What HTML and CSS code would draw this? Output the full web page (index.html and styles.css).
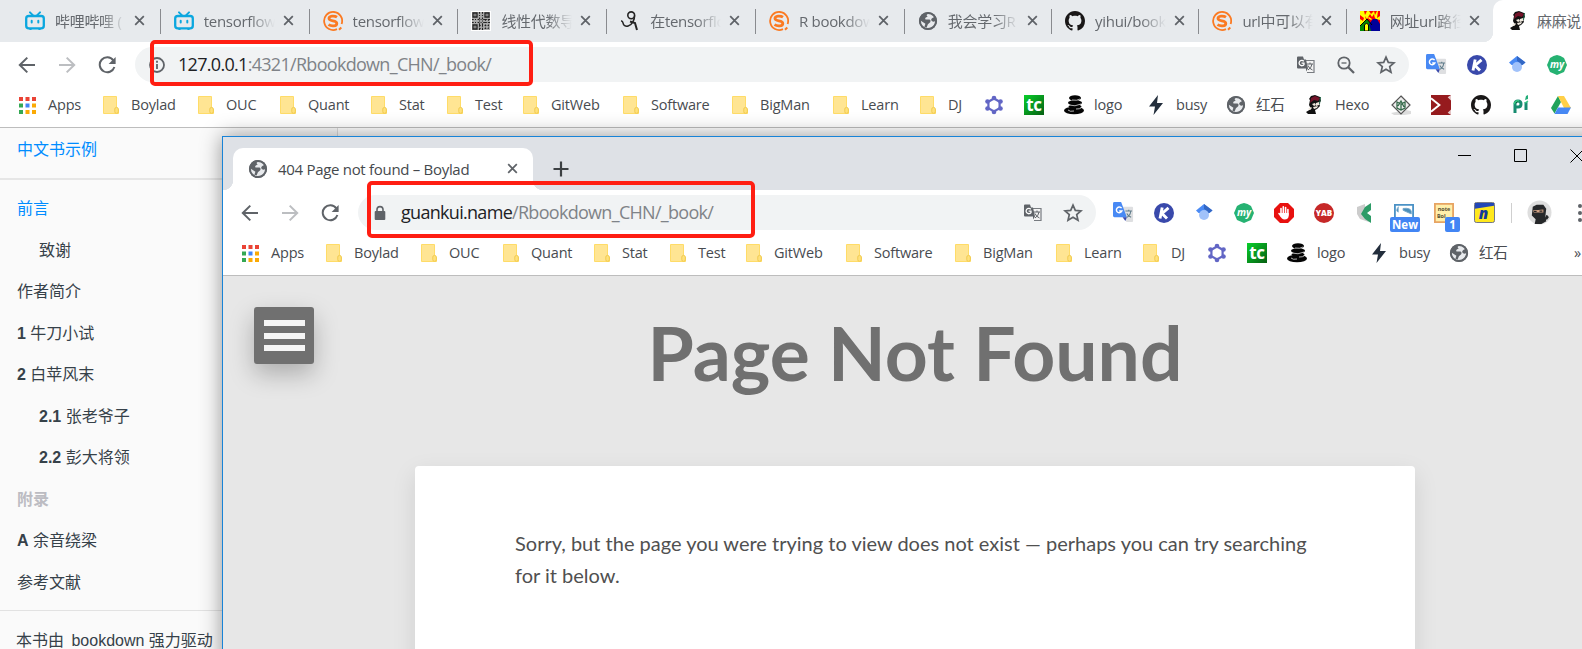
FILE: index.html
```html
<!DOCTYPE html>
<html lang="zh-CN">
<head>
<meta charset="utf-8">
<title>中文书示例</title>
<link rel="stylesheet" href="styles.css">
</head>
<body>
<svg class="sprite" aria-hidden="true">
  <defs>
    <linearGradient id="green" x1="0" y1="0" x2="1" y2="1"><stop offset="0" stop-color="#08cf2b"/><stop offset="1" stop-color="#075f12"/></linearGradient>
    <symbol id="close" viewBox="0 0 12 12"><path d="M1.3 1.3l9.4 9.4M10.7 1.3l-9.4 9.4" stroke="#5f6368" stroke-width="1.9"/></symbol>
    <symbol id="bili" viewBox="0 0 20 20"><g fill="none" stroke="#0ba7df" stroke-linecap="round"><rect x="1.2" y="5" width="17.6" height="12.4" rx="2.6" stroke-width="2.3"/><path d="M5 1.4l3 3M15 1.4l-3 3" stroke-width="2"/><path d="M6.7 9.8v1.8M13.3 9.8v1.8" stroke-width="2"/><path d="M5 18.3h1M14 18.3h1" stroke-width="1.5"/></g></symbol>
    <symbol id="sogou" viewBox="0 0 20 20"><path d="M18.600 13A9 9 0 1 0 14 18.100" fill="none" stroke="#fb7a22" stroke-width="1.8"/><path d="M14 6.2C11.5 4.5 6 4.5 6 7.6c0 3.2 7.8 1.5 7.8 4.8 0 3-5.6 3-8.3 1.2" fill="none" stroke="#fb7a22" stroke-width="2.8"/><path d="M16 18.700l2.300-2.200" stroke="#fb7a22" stroke-width="2"/></symbol>
    <symbol id="qr" viewBox="0 0 20 20"><path d="M0 0h20v20H0z" fill="#fff"/><path d="M1 1h18v18H1z" fill="#aaa"/><g stroke="#222" fill="none"><path d="M2 2h4v4H2zM14 2h4v4h-4zM2 14h4v4H2z" stroke-width="1.3"/><path d="M8.500 1v18M11.500 1v18M1 8.500h18M1 11.500h18M14.500 8v11M17.500 8v11M8 14.500h11M8 17.500h11" stroke-width="1.1" stroke-dasharray="1.7 1.300 1 1.6"/></g><path d="M3.500 3.500h1v1h-1zM15.500 3.500h1v1h-1zM3.500 15.500h1v1h-1z"/></symbol>
    <symbol id="figure" viewBox="0 0 20 20"><g fill="none" stroke="#252525"><circle cx="11.2" cy="4.300" r="3.4" stroke-width="1.6"/><path d="M14.600 4.5c.2 4-2.500 9.500-6.400 10.500-3 .7-4.800-.7-5.200-3.200-.2-1.3-1-1.800-1.900-2" stroke-width="1.5"/><path d="M10 10.500l5 1.500 2 7" stroke-width="2"/></g></symbol>
    <symbol id="globe" viewBox="0 0 20 20"><circle cx="10" cy="10" r="9" fill="#5f6368"/><path d="M12.8 2.4c-4.6 0-5 2-3.1 3-2 1-3.1 1.5-2.2 3.1h3.2c2.2 0 2 1.6 1.5 2.8l-2.3 2-1.3 3.1-2.2-.6 1-3.1-4.2-2.8-1.1-1.1C2 13.3 5 17 9.2 17.4c4.5.3 8.1-3 8.1-7.4-1.6 1.2-3.5.6-4-.8-.5-1.3.9-2.4 3-3.2z" fill="#e8eaed"/><circle cx="10" cy="10" r="8.1" fill="none" stroke="#5f6368" stroke-width="2"/></symbol>
    <symbol id="github" viewBox="0 0 16 16"><path fill="#191717" d="M8 0C3.58 0 0 3.58 0 8c0 3.54 2.29 6.53 5.47 7.59.4.07.55-.17.55-.38 0-.19-.01-.82-.01-1.49-2.01.37-2.53-.49-2.69-.94-.09-.23-.48-.94-.82-1.13-.28-.15-.68-.52-.01-.53.63-.01 1.08.58 1.23.82.72 1.21 1.87.87 2.33.66.07-.52.28-.87.51-1.07-1.78-.2-3.64-.89-3.64-3.95 0-.87.31-1.59.82-2.15-.08-.2-.36-1.02.08-2.12 0 0 .67-.21 2.2.82.64-.18 1.32-.27 2-.27s1.36.09 2 .27c1.53-1.04 2.2-.82 2.2-.82.44 1.1.16 1.92.08 2.12.51.56.82 1.27.82 2.15 0 3.07-1.87 3.75-3.65 3.95.29.25.54.73.54 1.48 0 1.07-.01 1.93-.01 2.2 0 .21.15.46.55.38A8.01 8.01 0 0 0 16 8c0-4.42-3.58-8-8-8z"/></symbol>
    <symbol id="house" viewBox="0 0 20 20"><path fill="#f00" d="M0 0h20v20H0z"/><path fill="#ff0" d="M0 0h4l1 4 2-4h2l2 3 3-3 1 4 2-4h1l-1 7 3-2v4l-4-1-2-2-3 3-3-2-3 3-2 2-3 3V8l3 2 1-3-4-3z"/><path fill="#f00" d="M5 5l2 3 3-5 2 3 2-3 1 5h-3l-3-2-3 3z"/><path fill="#080" d="M0 20v-5l7-7 4 5v7z"/><path fill="#009" d="M9 13l4-5h4l3 5v7h-9z"/><path d="M0 15l7-7 5 6" fill="none" stroke="#000"/><path fill="#ff0" stroke="#000" d="M4.5 20v-6l2-2 2 2v6z"/></symbol>
    <symbol id="face" viewBox="0 0 20 20"><path fill="#111" d="M6 1l4-1 5 2 1 4-2 2 1 3-3 3-2 1 1 4H3l-2-2 5-3-2-4 1-5-1-1z"/><path fill="#741329" d="M6 3l4-2 5 2-2 3-4-1-4 3z"/><path fill="#efe8dd" d="M7 9l3-1 1 2-2 1zM11 8l3-1v3l-3 1zM8 12l5-1-1 2-3 1zM3 14l3-2 1 1-2 2z"/><path fill="#24684a" d="M15 2h1l-1 7h-1z"/></symbol>
    <symbol id="back" viewBox="0 0 18 18"><path d="M17 9H2.3M9.3 1.6L1.8 9l7.5 7.4" fill="none" stroke="currentColor" stroke-width="2"/></symbol>
    <symbol id="reload" viewBox="0 0 18 18"><path d="M15.3 4.3A7.5 7.5 0 1 0 16.4 11" fill="none" stroke="#5f6368" stroke-width="2"/><path d="M17.6 1v7h-7z" fill="#5f6368"/></symbol>
    <symbol id="info" viewBox="0 0 16 16"><circle cx="8" cy="8" r="7" fill="none" stroke="#5f6368" stroke-width="1.8"/><path d="M8 7v5M8 3.8v2" stroke="#5f6368" stroke-width="1.8"/></symbol>
    <symbol id="lock" viewBox="0 0 16 16"><rect x="2.7" y="6" width="10.6" height="9" rx="1" fill="#5f6368"/><path d="M5 6.5V4.6a3 3 0 0 1 6 0v1.9" fill="none" stroke="#5f6368" stroke-width="1.6"/></symbol>
    <symbol id="translate" viewBox="0 0 20 20"><path d="M8 5.5h10v12h-7" fill="#f4f4f4" stroke="#777b80" stroke-width="1.2"/><path d="M1 2.5q0-1 1-1h5l1 3h2l2 9-2 3v-3H2q-1 0-1-1z" fill="#5f6368"/><path d="M7.8 6.2A2.7 2.7 0 1 0 8 9.6V8.1H5.6" fill="none" stroke="#fff" stroke-width="1.3"/><path d="M11 9h6M14 7.5V9M16 9q-.5 4-4 6M12 10.5q1 3 4.5 4.5" fill="none" stroke="#5f6368" stroke-width="1"/></symbol>
    <symbol id="gtranslate" viewBox="0 0 22 22"><path d="M9 5h11q1 0 1 1v14q0 1-1 1h-6" fill="#dedfe1"/><path d="M1.5 0h7l6 16H1.5Q0 16 0 14.500V1.5Q0 0 1.5 0z" fill="#4889f4"/><path d="M10 16h4.500L13 20z" fill="#3949ab"/><path d="M9 6.500a3 3 0 1 0 .3 3H6.500" fill="none" stroke="#fff" stroke-width="1.5"/><path d="M13 9.500h7M16.500 8v1.500M18.500 10q-.5 4.500-4 6M14.500 12q1 2.500 4.500 4" fill="none" stroke="#607d8b" stroke-width="1.100"/></symbol>
    <symbol id="zoomout" viewBox="0 0 18 18"><g fill="none" stroke="#5f6368"><circle cx="7" cy="7" r="5.700" stroke-width="1.800"/><path d="M11 11l6 6" stroke-width="2.300"/><path d="M4.500 7h5" stroke-width="1.300"/></g></symbol>
    <symbol id="star" viewBox="0 0 20 20"><path d="M10 2.200l2.300 5.200 5.700.5-4.300 3.700 1.300 5.600-5-3-5 3 1.300-5.600L2 7.900l5.700-.5z" fill="none" stroke="#5f6368" stroke-width="1.700"/></symbol>
    <symbol id="kext" viewBox="0 0 20 20"><circle cx="10" cy="10" r="10" fill="#3949ab"/><path d="M8.200 4.500L6 15.500M14.500 4.800L8 10.500l5 5" fill="none" stroke="#fff" stroke-width="2.900"/></symbol>
    <symbol id="scholar" viewBox="0 0 20 20"><path d="M2 7.500L10 1l8.500 6.500-3 2.500h-11z" fill="#4a8af4"/><path d="M10 1l8.500 6.500-4 2.900-4.500-5z" fill="#3367c4"/><circle cx="10" cy="12" r="5" fill="#a1c2fa"/></symbol>
    <symbol id="my" viewBox="0 0 20 20"><path d="M6.500 1L10 0l3.500 1L17 3l1.500 3.500L20 10l-1.500 3.500L17 17l-3.500 1.500L10 20l-3.500-1.500L3 17l-1.500-3.500L0 10l1.500-3.500L3 3z" fill="#26b272"/><text x="10" y="12.500" text-anchor="middle" class="my-text">my</text></symbol>
    <symbol id="hand" viewBox="0 0 20 20"><path d="M6 0h8l6 6v8l-6 6H6l-6-6V6z" fill="#e8110f"/><path d="M7 12V5.500M9.300 11V3.800M11.600 11V4.500M13.900 12V6.500M7 13l-2-2.500" stroke="#fff" stroke-width="1.600" stroke-linecap="round"/><path d="M6.200 10h8.500v2.500q0 4-4.200 4-2.900 0-4.500-4z" fill="#fff"/></symbol>
    <symbol id="yab" viewBox="0 0 20 20"><circle cx="10" cy="10" r="10" fill="#c62828"/><text x="10" y="13" text-anchor="middle" class="yab-text">YAB</text></symbol>
    <symbol id="kite" viewBox="0 0 20 20"><path d="M3 4l8-3v9l4 9-9-3-3-5z" fill="#ccc"/><path d="M17 0v7l-4 3 4 3v7l-6-4-4-5 4-7z" fill="#2d9c67"/></symbol>
    <symbol id="clip" viewBox="0 0 22 20"><path d="M1 1h20v17H1z" fill="#fff" stroke="#4b92c6" stroke-width="2"/><path d="M5 3Q1 8 5 9M10 5q8-1 9 3v3Q14 9 10 7z" fill="#4b8fbb" stroke="#73a7ca"/></symbol>
    <symbol id="note" viewBox="0 0 22 22"><path d="M1 1h20v20H1z" fill="#ffefaa" stroke="#e7a463" stroke-width="2"/><text x="11" y="9" text-anchor="middle" class="note-text">note</text><text x="8" y="16" text-anchor="middle" class="note-text">Bol</text></symbol>
    <symbol id="next" viewBox="0 0 22 22"><rect width="21" height="21" x=".5" y=".5" rx="2" fill="#ffe81d" stroke="#6a6f8a"/><path d="M1 1h20v3L1 7z" fill="#2347b6"/><text x="10" y="18" text-anchor="middle" class="next-text">n</text></symbol>
    <symbol id="ninja" viewBox="0 0 26 26"><circle cx="13" cy="13" r="12.500" fill="#dedede"/><path d="M6 7l4-2h7l3 4-1 9 1 4-5 3H8l1-5-4-4z" fill="#26282a"/><path d="M6 11l11-1v3H7z" fill="#d2a284"/><path d="M7 12h3M13 11.500h3" stroke="#222" stroke-width="1.200"/><path d="M18 22l3-6M20 20l2-3" stroke="#26282a" stroke-width="2"/></symbol>
    <symbol id="apps" viewBox="0 0 17 17"><path fill="#ea4335" d="M0 0h4v4H0zM6.500 0h4v4h-4zM13 0h4v4h-4z"/><path fill="#34a853" d="M0 6.500h4v4H0zM0 13h4v4H0z"/><path fill="#4285f4" d="M6.500 6.500h4v4h-4z"/><path fill="#fbaa05" d="M13 6.500h4v4h-4zM6.500 13h4v4h-4zM13 13h4v4h-4z"/></symbol>
    <symbol id="folder" viewBox="0 0 16 18"><path d="M.5.5h13v11l2 2v4H.5z" fill="#ffe593" stroke="#ffdc68"/><rect x="11.800" y="11.500" width="3.500" height="5.800" rx="1.500" fill="#ffe17c" stroke="#f1cb50"/></symbol>
    <symbol id="hexa" viewBox="0 0 20 20"><path d="M10 3.500l5.600 3.200v6.500L10 16.500l-5.600-3.300V6.700z" fill="none" stroke="#6266c5" stroke-width="2.200"/><g fill="#6266c5"><circle cx="10" cy="3" r="2.300"/><circle cx="16.500" cy="6.500" r="2.300"/><circle cx="16.500" cy="13.500" r="2.300"/><circle cx="10" cy="17" r="2.300"/><circle cx="3.500" cy="13.500" r="2.300"/><circle cx="3.500" cy="6.500" r="2.300"/></g></symbol>
    <symbol id="tc" viewBox="0 0 20 20"><path d="M0 0h20v20H0z" fill="url(#green)"/><text x="10" y="16" text-anchor="middle" class="tc-text">tc</text></symbol>
    <symbol id="stones" viewBox="0 0 20 20"><g fill="#050505"><ellipse cx="11" cy="3" rx="6" ry="2.800"/><ellipse cx="11" cy="7.800" rx="7" ry="2.700"/><ellipse cx="11" cy="11.500" rx="6.500" ry="2.200"/><ellipse cx="10" cy="15.500" rx="10" ry="3.800"/></g><path d="M8 5q5 1 8-1M5 10q6 2 12-1M4 15q2 2 6 1M12 14q4 0 5-1" fill="none" stroke="#ddd" stroke-width=".8"/></symbol>
    <symbol id="bolt" viewBox="0 0 14 20"><path fill="#232e3c" d="M9 0L0 11.500h6L4.500 20 14 8H8z"/></symbol>
    <symbol id="diamond" viewBox="0 0 20 20"><path d="M0 16l5-1M15 15l5 1v3l-7 1H3L0 18z" fill="#ddd"/><path d="M10 1l9 9-9 9-9-9z" fill="#eee" stroke="#555" stroke-width="1.200"/><path d="M6 7l4 2 4-2v6l-4 2-4-2zM10 9v6M7 11l3-5 3 6" fill="none" stroke="#346a4a" stroke-width="1.300"/></symbol>
    <symbol id="redx" viewBox="0 0 18 18"><path d="M0 0h18v18H0z" fill="#961b1e"/><path d="M0 3l7.500 6L0 15" fill="none" stroke="#fff" stroke-width="1.800"/><path d="M18 0l-3 2 3 3zM18 13l-3 3 3 2z" fill="#fff" opacity=".75"/></symbol>
    <symbol id="pi" viewBox="0 0 18 20"><path d="M3 18V9q0-3 3-3t3 3-3 3-3-1M14 7v8" fill="none" stroke="#178c70" stroke-width="3"/><path d="M14 1l2-1v4l-3 1z" fill="#23ad78"/><path d="M2 9q2-4 5-3M13 8l3-2" stroke="#36cb83" stroke-width="1.500"/></symbol>
    <symbol id="drive" viewBox="0 0 20 18"><path d="M7 0L0 12l3.500 5.500L10 6z" fill="#20a35b"/><path d="M7 0h6l7 12h-7z" fill="#ffcf48"/><path d="M7 11.500h13L16.500 18h-13z" fill="#4688f4"/></symbol>
  </defs>
</svg>

<div class="desktop">
  <section class="browser back-window">
    <div class="tabs">
      <div class="tab"><svg class="favicon"><use href="#bili"/></svg><span class="tab-title">哔哩哔哩 (</span><svg class="close"><use href="#close"/></svg></div>
      <div class="tab"><svg class="favicon"><use href="#bili"/></svg><span class="tab-title">tensorflow</span><svg class="close"><use href="#close"/></svg></div>
      <div class="tab"><svg class="favicon"><use href="#sogou"/></svg><span class="tab-title">tensorflow</span><svg class="close"><use href="#close"/></svg></div>
      <div class="tab"><svg class="favicon"><use href="#qr"/></svg><span class="tab-title">线性代数导</span><svg class="close"><use href="#close"/></svg></div>
      <div class="tab"><svg class="favicon"><use href="#figure"/></svg><span class="tab-title">在tensorflo</span><svg class="close"><use href="#close"/></svg></div>
      <div class="tab"><svg class="favicon"><use href="#sogou"/></svg><span class="tab-title">R bookdow</span><svg class="close"><use href="#close"/></svg></div>
      <div class="tab"><svg class="favicon"><use href="#globe"/></svg><span class="tab-title">我会学习R</span><svg class="close"><use href="#close"/></svg></div>
      <div class="tab"><svg class="favicon"><use href="#github"/></svg><span class="tab-title">yihui/book</span><svg class="close"><use href="#close"/></svg></div>
      <div class="tab"><svg class="favicon"><use href="#sogou"/></svg><span class="tab-title">url中可以有</span><svg class="close"><use href="#close"/></svg></div>
      <div class="tab"><svg class="favicon"><use href="#house"/></svg><span class="tab-title">网址url路径</span><svg class="close"><use href="#close"/></svg></div>
      <div class="tab current"><svg class="favicon"><use href="#face"/></svg><span class="tab-title">麻麻说</span></div>
    </div>
    <div class="toolbar">
      <div class="nav"><svg><use href="#back"/></svg><svg class="forward"><use href="#back"/></svg><svg><use href="#reload"/></svg></div>
      <div class="omnibox"><svg class="site"><use href="#info"/></svg><span class="url"><b>127.0.0.1</b>:4321/Rbookdown_CHN/_book/</span><div class="actions"><svg><use href="#translate"/></svg><svg class="magnifier"><use href="#zoomout"/></svg><svg><use href="#star"/></svg></div></div>
      <div class="extensions"><svg class="wide"><use href="#gtranslate"/></svg><svg><use href="#kext"/></svg><svg><use href="#scholar"/></svg><svg><use href="#my"/></svg></div>
    </div>
    <div class="bookmarks">
      <span><svg class="apps"><use href="#apps"/></svg>Apps</span><span><svg><use href="#folder"/></svg>Boylad</span><span><svg><use href="#folder"/></svg>OUC</span><span><svg><use href="#folder"/></svg>Quant</span><span><svg><use href="#folder"/></svg>Stat</span><span><svg><use href="#folder"/></svg>Test</span><span><svg><use href="#folder"/></svg>GitWeb</span><span><svg><use href="#folder"/></svg>Software</span><span><svg><use href="#folder"/></svg>BigMan</span><span><svg><use href="#folder"/></svg>Learn</span><span><svg><use href="#folder"/></svg>DJ</span><span><svg class="logo"><use href="#hexa"/></svg></span><span><svg class="logo"><use href="#tc"/></svg></span><span><svg class="logo"><use href="#stones"/></svg>logo</span><span><svg class="logo"><use href="#bolt"/></svg>busy</span><span><svg class="logo"><use href="#globe"/></svg>红石</span><span><svg class="logo"><use href="#face"/></svg>Hexo</span><span><svg class="logo"><use href="#diamond"/></svg></span><span><svg class="logo"><use href="#redx"/></svg></span><span><svg class="logo"><use href="#github"/></svg></span><span><svg class="logo"><use href="#pi"/></svg></span><span><svg class="logo"><use href="#drive"/></svg></span>
    </div>
    <aside class="book">
      <div class="book-title">中文书示例</div>
      <ul class="chapters">
        <li class="active">前言</li>
        <li class="sub">致谢</li>
        <li>作者简介</li>
        <li><b>1</b> 牛刀小试</li>
        <li><b>2</b> 白苹风末</li>
        <li class="sub"><b>2.1</b> 张老爷子</li>
        <li class="sub"><b>2.2</b> 彭大将领</li>
        <li class="part">附录</li>
        <li><b>A</b> 余音绕梁</li>
        <li>参考文献</li>
      </ul>
      <div class="powered">本书由 <span>bookdown</span> 强力驱动</div>
    </aside>
  </section>

  <section class="browser front-window">
    <div class="titlebar">
      <div class="page-tab"><svg class="favicon"><use href="#globe"/></svg><span>404 Page not found – Boylad</span><svg class="close"><use href="#close"/></svg></div>
      <svg class="new-tab" viewBox="0 0 16 16"><path d="M8 .5v15M.5 8h15" stroke="#3c4043" stroke-width="2.200"/></svg>
      <div class="window-controls">
        <svg viewBox="0 0 14 14"><path d="M0 6.500h13" stroke="#000"/></svg>
        <svg viewBox="0 0 14 14"><path d="M.5.5h12v12H.5z" fill="none" stroke="#000"/></svg>
        <svg viewBox="0 0 14 14"><path d="M.5.5l13 13M13.500.5l-13 13" stroke="#000"/></svg>
      </div>
    </div>
    <div class="toolbar">
      <div class="nav"><svg><use href="#back"/></svg><svg class="forward"><use href="#back"/></svg><svg><use href="#reload"/></svg></div>
      <div class="omnibox"><svg class="site"><use href="#lock"/></svg><span class="url"><b>guankui.name</b>/Rbookdown_CHN/_book/</span><div class="actions"><svg><use href="#translate"/></svg><svg><use href="#star"/></svg></div></div>
      <div class="extensions">
        <svg class="wide"><use href="#gtranslate"/></svg><svg><use href="#kext"/></svg><svg><use href="#scholar"/></svg><svg><use href="#my"/></svg><svg><use href="#hand"/></svg><svg><use href="#yab"/></svg><svg><use href="#kite"/></svg>
        <div class="badged"><svg><use href="#clip"/></svg><span class="badge badge-new">New</span></div>
        <div class="badged"><svg><use href="#note"/></svg><span class="badge">1</span></div>
        <svg class="wide"><use href="#next"/></svg>
      </div>
      <div class="profile"><svg class="avatar"><use href="#ninja"/></svg><svg class="dots" viewBox="0 0 4 18"><circle cx="2" cy="2" r="2" fill="#5f6368"/><circle cx="2" cy="9" r="2" fill="#5f6368"/><circle cx="2" cy="16" r="2" fill="#5f6368"/></svg></div>
    </div>
    <div class="bookmarks">
      <span><svg class="apps"><use href="#apps"/></svg>Apps</span><span><svg><use href="#folder"/></svg>Boylad</span><span><svg><use href="#folder"/></svg>OUC</span><span><svg><use href="#folder"/></svg>Quant</span><span><svg><use href="#folder"/></svg>Stat</span><span><svg><use href="#folder"/></svg>Test</span><span><svg><use href="#folder"/></svg>GitWeb</span><span><svg><use href="#folder"/></svg>Software</span><span><svg><use href="#folder"/></svg>BigMan</span><span><svg><use href="#folder"/></svg>Learn</span><span><svg><use href="#folder"/></svg>DJ</span><span><svg class="logo"><use href="#hexa"/></svg></span><span><svg class="logo"><use href="#tc"/></svg></span><span><svg class="logo"><use href="#stones"/></svg>logo</span><span><svg class="logo"><use href="#bolt"/></svg>busy</span><span><svg class="logo"><use href="#globe"/></svg>红石</span><span class="more">»</span>
    </div>
    <main class="missing">
      <div class="menu-button"><i></i><i></i><i></i></div>
      <h1>Page Not Found</h1>
      <article class="message">Sorry, but the page you were trying to view does not exist — perhaps you can try searching for it below.</article>
    </main>
  </section>
  <div class="mark mark-local"></div>
  <div class="mark mark-remote"></div>
</div>
</body>
</html>
```
FILE: styles.css
```css
* { box-sizing: border-box; }
body { margin: 0; overflow: hidden; background: #fff; }
svg { display: block; flex: none; overflow: visible; }
.sprite { position: absolute; width: 0; height: 0; }
.desktop { position: relative; width: 1582px; height: 649px; overflow: hidden; }
.browser { font-family: "Open Sans", "Noto Sans CJK SC", sans-serif; background: #fff; }
.back-window { height: 649px; }

.tabs { display: flex; height: 42px; padding-left: 11px; background: #e7eaed; }
.tab { position: relative; display: flex; flex: none; align-items: center; width: 148.800px; padding: 0 0 1px 14px; color: #65696e; font-size: 15px; letter-spacing: -.3px; }
.tab::after { content: ""; position: absolute; right: -1px; top: 9px; width: 1px; height: 25px; background: #898b8f; }
.favicon { width: 20px; height: 20px; }
.tab-title { width: 71px; height: 24px; margin-left: 10px; overflow: hidden; line-height: 24px; white-space: nowrap; -webkit-mask-image: linear-gradient(90deg, #000 64%, transparent); mask-image: linear-gradient(90deg, #000 64%, transparent); }
.close { width: 11px; height: 11px; margin-left: 8px; }
.tab:nth-child(n+7) { width: 147.300px; }
.tab:nth-child(10)::after { display: none; }
.tab.current { width: 110px; padding-left: 16px; border-radius: 10px 0 0; background: #fff; }
.current::before { content: ""; position: absolute; left: -10px; bottom: 0; width: 10px; height: 10px; background: radial-gradient(circle at 0 0, #e7eaed 10px, #fff 10.500px); }
.tab.current::after { display: none; }
.current .tab-title { margin-left: 8px; -webkit-mask-image: none; mask-image: none; }

.toolbar { display: flex; align-items: center; height: 45px; }
.nav { display: flex; flex: none; gap: 22px; width: 117px; margin-left: 18px; color: #5f6368; }
.nav svg { width: 18px; height: 18px; }
.nav .forward { color: #bcbec1; transform: scaleX(-1); }
.omnibox { display: flex; flex: none; align-items: center; width: 1274px; height: 35px; padding-left: 14px; border-radius: 18px; background: #f1f3f4; }
.site { width: 16px; height: 16px; }
.url { width: 330px; margin: -1px 0 0 13px; color: #7f8388; font-size: 18px; line-height: 26px; letter-spacing: -.7px; white-space: nowrap; }
.url b { color: #202124; font-weight: 400; }
.actions { display: flex; gap: 20px; margin-left: auto; padding-right: 13px; }
.actions svg { width: 20px; height: 20px; }
.actions .magnifier { width: 18px; height: 18px; margin: 1px; }
.extensions { display: flex; align-items: center; gap: 20px; margin-left: 17px; }
.extensions svg { width: 20px; height: 20px; }
.extensions .wide { width: 21px; height: 21px; }

.bookmarks { display: flex; align-items: center; height: 41px; padding: 0 0 4px 19px; border-bottom: 1px solid #bdbdbd; color: #484b50; font-size: 14.500px; line-height: 22px; }
.bookmarks span { display: flex; flex: none; align-items: center; gap: 12px; height: 30px; white-space: nowrap; letter-spacing: -.2px; }
.bookmarks svg { width: 16px; height: 18px; }
.bookmarks .apps { width: 17px; height: 17px; }
.bookmarks .logo { width: 20px; height: 20px; margin-right: -2px; }
.bookmarks span:nth-child(1) { width: 84px; }
.bookmarks span:nth-child(2) { width: 95px; }
.bookmarks span:nth-child(3) { width: 82px; }
.bookmarks span:nth-child(4) { width: 91px; }
.bookmarks span:nth-child(5) { width: 76px; }
.bookmarks span:nth-child(6) { width: 76px; }
.bookmarks span:nth-child(7) { width: 100px; }
.bookmarks span:nth-child(8) { width: 109px; }
.bookmarks span:nth-child(9) { width: 101px; }
.bookmarks span:nth-child(10) { width: 87px; }
.bookmarks span:nth-child(11) { width: 64px; }
.bookmarks span:nth-child(12) { width: 40px; }
.bookmarks span:nth-child(13) { width: 40px; }
.bookmarks span:nth-child(14) { width: 82px; }
.bookmarks span:nth-child(15) { width: 80px; }
.bookmarks span:nth-child(16) { width: 79px; }
.bookmarks span:nth-child(17) { width: 86px; }
.bookmarks span:nth-child(n+18) { width: 40px; }

.book { width: 338px; height: 521px; border-right: 1px solid #ddd; background: #fafafa; color: #364149; font: 16px/24px "Liberation Sans", "Noto Sans CJK SC", sans-serif; }
.book-title { height: 52px; padding: 10px 0 0 17px; border-bottom: 2px solid #e6e6e6; color: #008cff; }
.chapters { height: 431px; margin: 0; padding: 17px 0 0 17px; border-bottom: 1px solid #e2e2e2; list-style: none; }
.chapters li { height: 41.500px; }
.chapters .sub { padding-left: 22px; }
.chapters .active { color: #008cff; }
.chapters .part { color: #bcbcc2; font-weight: 700; }
.powered { padding: 18px 0 0 16px; white-space: nowrap; }
.powered span { margin-left: 3px; }

.front-window { position: absolute; left: 222px; top: 136px; width: 1385px; height: 530px; border: solid #1883d7; border-width: 1px 0 0 1px; box-shadow: 0 0 20px rgba(0, 0, 0, .42); }
.titlebar { display: flex; align-items: center; height: 53px; padding-left: 10px; background: #dee1e6; }
.page-tab { position: relative; display: flex; align-self: flex-end; align-items: center; width: 300px; height: 42px; padding: 0 0 1px 15px; border-radius: 10px 10px 0 0; background: #fff; color: #45494d; font-size: 15px; letter-spacing: -.3px; }
.page-tab::before, .page-tab::after { content: ""; position: absolute; bottom: 0; width: 10px; height: 10px; }
.page-tab::before { left: -10px; background: radial-gradient(circle at 0 0, #dee1e6 10px, #fff 10.500px); }
.page-tab::after { right: -10px; background: radial-gradient(circle at 100% 0, #dee1e6 10px, #fff 10.500px); }
.page-tab span { width: 219px; margin-left: 10px; white-space: nowrap; }
.page-tab .close { margin-left: 10px; }
.new-tab { width: 16px; height: 16px; margin: 11px 0 0 20px; }
.window-controls { display: flex; gap: 42px; margin: -15px 0 0 889px; }
.window-controls svg { width: 14px; height: 14px; }
.front-window .omnibox { width: 738px; }
.front-window .toolbar { height: 45px; }
.front-window .bookmarks { height: 41px; padding-bottom: 4px; }
.front-window .bookmarks span:nth-child(16) { width: 125px; }
.badged { position: relative; }
.badge { position: absolute; right: -6px; bottom: -9px; width: 15px; height: 15px; border-radius: 2px; background: #4285f4; color: #fff; font-size: 11.500px; font-weight: 700; line-height: 15px; text-align: center; }
.badge-new { width: 30px; }
.profile { display: flex; align-items: center; gap: 26px; height: 20px; margin-left: 16px; padding-left: 15px; border-left: 1px solid #cfcfcf; }
.avatar { width: 25px; height: 25px; }
.dots { width: 4px; height: 18px; }
.my-text { fill: #fff; font: italic 700 10px "Open Sans", sans-serif; }
.yab-text { fill: #fff; font: 800 8px "Open Sans", sans-serif; }
.note-text { fill: #554e32; font: 700 6px "Open Sans", sans-serif; }
.next-text { fill: #123a9a; font: italic 900 16px "Open Sans", sans-serif; }
.tc-text { fill: #fff; font: 700 17px "Open Sans", sans-serif; }

.missing { display: flex; flex-direction: column; align-items: center; height: 391px; background: #e7e7e7; padding-top: 31px; }
.menu-button { display: flex; flex: none; flex-direction: column; align-items: center; align-self: flex-start; gap: 6.500px; width: 60px; height: 57px; margin-left: 31px; padding-top: 13px; border-radius: 3px; background: #707070; box-shadow: 0 10px 24px rgba(0, 0, 0, .25); }
.menu-button i { width: 41px; height: 6px; background: #f5f5f5; }
.missing h1 { margin: -57px 0 0; color: #707070; font: 700 75px/90px Lato, sans-serif; white-space: nowrap; }
.message { flex: none; width: 1000px; height: 250px; margin-top: 69px; padding: 61px 100px; border-radius: 4px; background: #fff; box-shadow: 0 8px 24px rgba(0, 0, 0, .1); color: #505050; font: 20px/32px Lato, sans-serif; }

.mark { position: absolute; border: 4px solid #ff1e12; border-radius: 5px; }
.mark-local { left: 150px; top: 39.500px; width: 383px; height: 46px; }
.mark-remote { left: 367px; top: 180.500px; width: 388px; height: 57px; }
```
